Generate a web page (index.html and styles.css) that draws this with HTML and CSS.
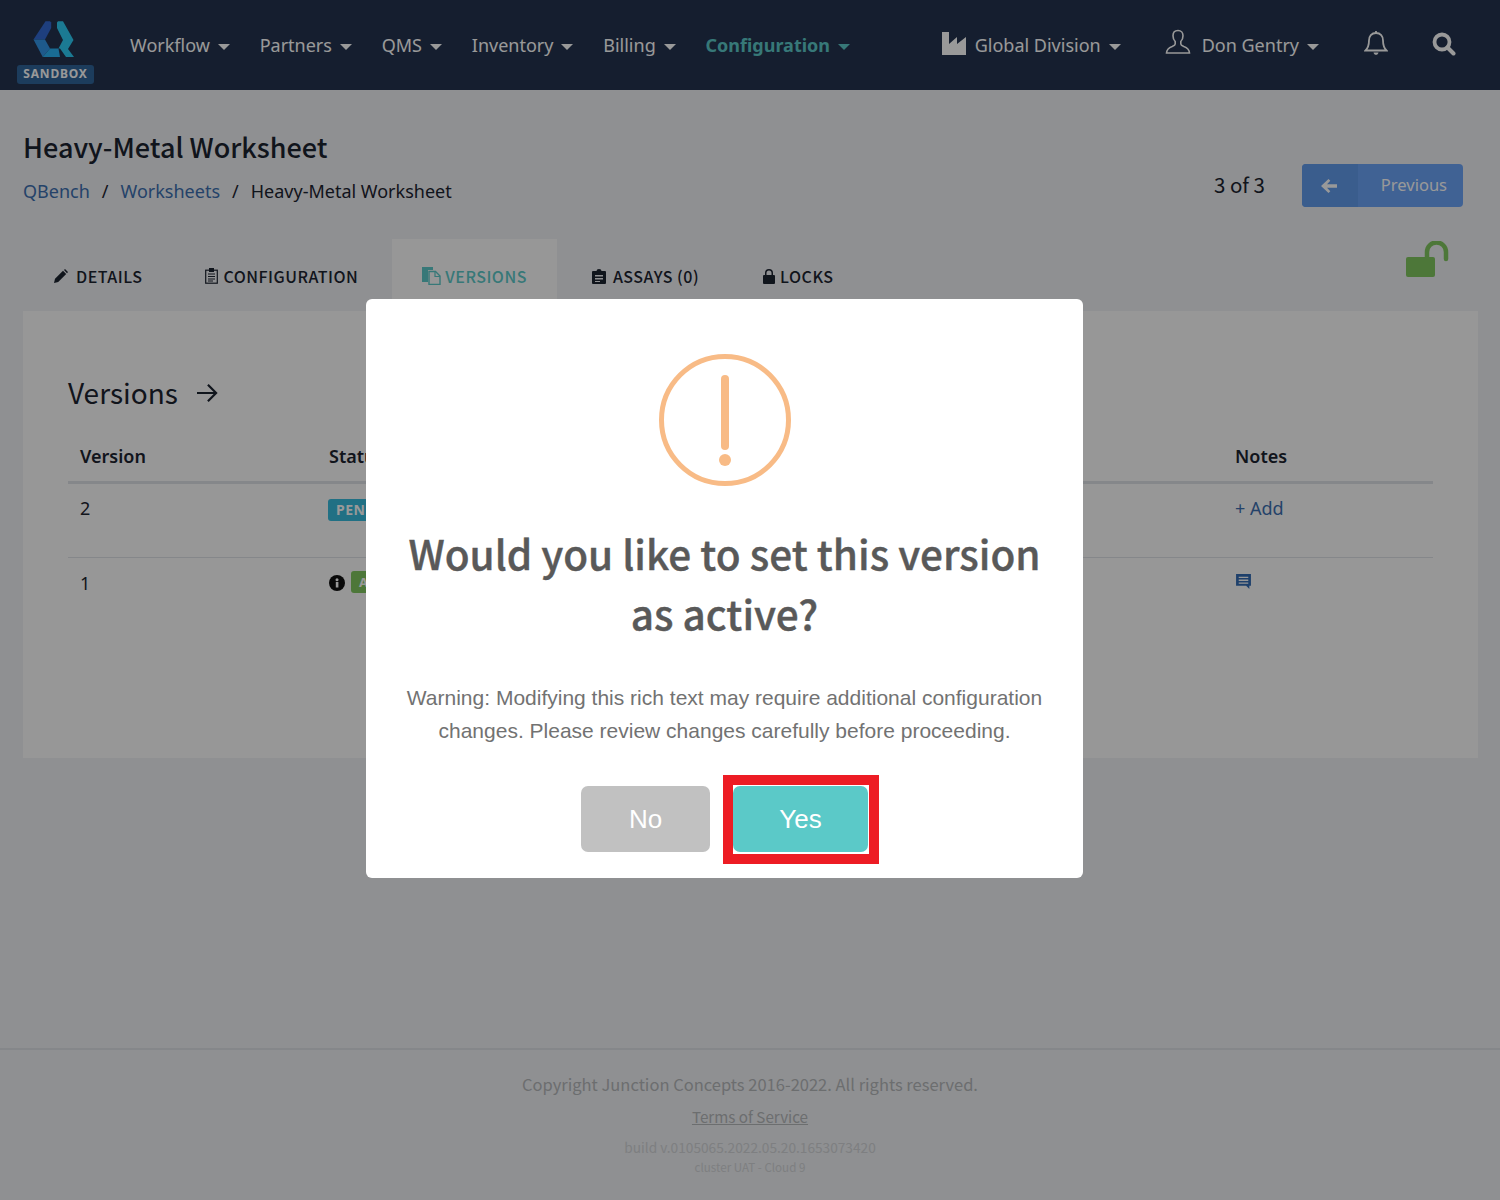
FILE: index.html
```html
<!DOCTYPE html>
<html lang="en">
<head>
<meta charset="utf-8">
<title>Heavy-Metal Worksheet</title>
<link rel="stylesheet" href="styles.css">
</head>
<body>
<header class="topbar">
  <a class="brand">
    <svg class="brand-logo" viewBox="7 8 44 39" width="44" height="39">
      <path d="M19.500 9.300H24l1.200 1.200V16L19 27.500H7.500z" fill="#3269d3"/>
      <path d="M7.500 27.500H19l5 9-7.300 8.500z" fill="#3396e8"/>
      <path d="M24 36.500h8.500l1.500 8.500H16.700z" fill="#2bb2f5"/>
      <path d="M31 10.500l1-1.200h5L47.500 28 42 37l6 8h-8l-6-8.500h-1.500L37 28 31 16z" fill="#2dccf5"/>
    </svg>
    <span class="brand-badge">SANDBOX</span>
  </a>
  <nav class="nav-main">
    <a class="nav-link">Workflow<i class="caret"></i></a>
    <a class="nav-link">Partners<i class="caret"></i></a>
    <a class="nav-link">QMS<i class="caret"></i></a>
    <a class="nav-link">Inventory<i class="caret"></i></a>
    <a class="nav-link">Billing<i class="caret"></i></a>
    <a class="nav-link nav-active">Configuration<i class="caret"></i></a>
  </nav>
  <div class="nav-right">
    <a class="nav-link nav-division">
      <svg viewBox="0 0 26 25" width="26" height="25"><path d="M1 1h7v12l8-7v7l9-7v18H1z" fill="#fff"/></svg>
      Global Division<i class="caret"></i>
    </a>
    <a class="nav-link nav-user">
      <svg viewBox="0 0 26 26" width="26" height="26" fill="none" stroke="#fff" stroke-width="1.600"><path d="M13 1.500c-3.200 0-5 2.200-5 5.200 0 2.600 1 4.600 2.200 5.800v2.500c0 1-1 1.700-3 2.500-3 1.100-5.500 2.500-5.700 6.500h23c-.2-4-2.700-5.400-5.700-6.500-2-.8-3-1.500-3-2.500v-2.500c1.200-1.200 2.200-3.200 2.200-5.800 0-3-1.800-5.200-5-5.200z"/></svg>
      Don Gentry<i class="caret"></i>
    </a>
    <a class="nav-icon">
      <svg viewBox="0 0 24 28" width="24" height="28" fill="none" stroke="#fff" stroke-width="1.800"><path d="M12 4c-4.500 0-7 3.300-7 7.500 0 5-1 7.500-3.500 10h21c-2.500-2.500-3.500-5-3.500-10C19 7.300 16.500 4 12 4z"/><path d="M12 4V2"/><path d="M9.500 23.500c.4 1.600 1.300 2.300 2.500 2.300s2.100-.7 2.500-2.300z" fill="#fff" stroke="none"/></svg>
    </a>
    <a class="nav-icon">
      <svg viewBox="0 0 24 24" width="24" height="24" fill="none" stroke="#fff"><circle cx="10" cy="10" r="7.500" stroke-width="3.800"/><path d="M15.500 15.500l6 6" stroke-width="4" stroke-linecap="round"/></svg>
    </a>
  </div>
</header>

<main class="page">
  <div class="page-head">
    <div class="page-titles">
      <h1 class="page-title">Heavy-Metal Worksheet</h1>
      <ol class="crumbs">
        <li><a class="link">QBench</a></li>
        <li class="crumb-sep">/</li>
        <li><a class="link">Worksheets</a></li>
        <li class="crumb-sep">/</li>
        <li>Heavy-Metal Worksheet</li>
      </ol>
    </div>
    <div class="pager">
      <span class="pager-count">3 of 3</span>
      <a class="pager-btn">
        <span class="pager-btn-icon">
          <svg viewBox="0 0 16 14" width="16" height="14"><path d="M7.500 0L9.300 1.800 6 5.300h10v3.400H6l3.300 3.500L7.500 14 0 7z" fill="#fff"/></svg>
        </span>
        <span class="pager-btn-label">Previous</span>
      </a>
    </div>
  </div>

  <div class="tabs-row">
    <ul class="tabs">
      <li class="tab tab-first">
        <svg viewBox="0 0 14 14" width="14" height="14"><path d="M0 14l1-4.200 8-8 3.200 3.200-8 8zM10 1l1-1 3 3-1 1.200z" fill="currentColor"/></svg>
        <span class="tab-gap-s">Details</span>
      </li>
      <li class="tab">
        <svg viewBox="0 0 13 16" width="13" height="16" fill="none" stroke="currentColor"><rect x=".7" y="2.200" width="11.600" height="13" stroke-width="1.200"/><path d="M3 6h7M3 8.500h7M3 11h7M3 13h5" stroke-width="1.200"/><rect x="4.500" y=".5" width="4" height="3" fill="currentColor"/></svg>
        <span>Configuration</span>
      </li>
      <li class="tab tab-active">
        <svg viewBox="0 0 19 18" width="19" height="18"><path d="M0 0h11v3H6v12H0z" fill="currentColor"/><path d="M7 4.500h6.500l4.500 4.500v8.500H7z" fill="none" stroke="currentColor" stroke-width="1.400"/><path d="M13 5v4.500h5" fill="none" stroke="currentColor" stroke-width="1.200"/></svg>
        <span>Versions</span>
      </li>
      <li class="tab tab-assays">
        <svg viewBox="0 0 14 15" width="14" height="15"><path fill-rule="evenodd" d="M1 2h3.500a2.500 2 0 0 1 5 0H13a1 1 0 0 1 1 1v11a1 1 0 0 1-1 1H1a1 1 0 0 1-1-1V3a1 1 0 0 1 1-1zM3 6v1.500h8V6zm0 3v1.500h8V9zm0 3v1h5v-1z" fill="currentColor"/></svg>
        <span>Assays (0)</span>
      </li>
      <li class="tab">
        <svg viewBox="0 0 12 15" width="12" height="15"><path d="M1 6h1V4a4 4 0 0 1 8 0v2h1a1 1 0 0 1 1 1v7a1 1 0 0 1-1 1H1a1 1 0 0 1-1-1V7a1 1 0 0 1 1-1zm2.500 0h5V4a2.500 2.500 0 0 0-5 0z" fill="currentColor"/></svg>
        <span>Locks</span>
      </li>
    </ul>
    <svg class="lock-open" viewBox="0 0 43 36" width="43" height="36"><rect x="0" y="16" width="29" height="20" rx="2" fill="#80c75f"/><path d="M21 16V11a9.500 9.500 0 0 1 19 0v7" fill="none" stroke="#80c75f" stroke-width="4.500" stroke-linecap="round"/></svg>
  </div>

  <section class="card">
    <h2 class="card-title">Versions
      <svg viewBox="0 0 24 22" width="22" height="20" fill="none" stroke="currentColor" stroke-width="2.400"><path d="M1 11h21M13 2l9 9-9 9"/></svg>
    </h2>
    <table class="versions">
      <colgroup><col class="col-version"><col class="col-status"><col class="col-mid"><col></colgroup>
      <thead>
        <tr><th>Version</th><th>Status</th><th>Created</th><th>Notes</th></tr>
      </thead>
      <tbody>
        <tr>
          <td>2</td>
          <td><span class="tag tag-pending">PENDING</span></td>
          <td></td>
          <td><a class="link">+ Add</a></td>
        </tr>
        <tr>
          <td>1</td>
          <td class="status-cell">
            <svg viewBox="0 0 16 16" width="16" height="16"><circle cx="8" cy="8" r="8" fill="#111"/><rect x="6.800" y="7" width="2.600" height="5.500" fill="#fff"/><circle cx="8" cy="4.700" r="1.500" fill="#fff"/></svg>
            <span class="tag tag-active">ACTIVE</span>
          </td>
          <td></td>
          <td>
            <svg class="note-icon" viewBox="0 0 16 16" width="17" height="17"><path fill-rule="evenodd" d="M1 1h14v11h-1.500v3L10.500 12H1zM3.500 3.500v1.300h9V3.500zm0 2.700v1.300h9V6.200zm0 2.700v1.300h9V8.900z" fill="#336bb3"/></svg>
          </td>
        </tr>
      </tbody>
    </table>
  </section>
</main>

<footer class="footer">
  <p class="footer-copy">Copyright Junction Concepts 2016-2022. All rights reserved.</p>
  <p class="footer-terms"><a>Terms of Service</a></p>
  <p class="footer-build">build v.0105065.2022.05.20.1653073420</p>
  <p class="footer-cluster">cluster UAT - Cloud 9</p>
</footer>

<div class="overlay"></div>
<div class="modal">
  <div class="modal-icon"><span class="modal-icon-bar"></span><span class="modal-icon-dot"></span></div>
  <h2 class="modal-title">Would you like to set this version as active?</h2>
  <p class="modal-text">Warning: Modifying this rich text may require additional configuration changes. Please review changes carefully before proceeding.</p>
  <div class="modal-actions">
    <button class="btn btn-no">No</button>
    <span class="highlight"><button class="btn btn-yes">Yes</button></span>
  </div>
</div>
</body>
</html>
```
FILE: styles.css
```css
* { box-sizing: border-box; }
html, body { margin: 0; padding: 0; }
body {
  min-height: 1200px;
  display: flex;
  flex-direction: column;
  background: #eef0f3;
  font-family: "Noto Sans", sans-serif;
  font-size: 18px;
  color: #1c2330;
}
a { color: inherit; text-decoration: none; }
p, h1, h2, ul, ol { margin: 0; padding: 0; list-style: none; }

/* top bar */
.topbar {
  height: 90px;
  flex: none;
  display: flex;
  align-items: center;
  background: #23334f;
  color: #fff;
  padding-left: 17px;
}
.brand {
  width: 77px;
  display: flex;
  flex-direction: column;
  align-items: center;
  gap: 6px;
  margin-top: 13px;
}
.brand-logo { display: block; margin-left: -2px; }
.brand-badge {
  width: 77px;
  height: 19px;
  background: #2f6499;
  border-radius: 3px;
  font-size: 12px;
  font-weight: 700;
  letter-spacing: .8px;
  line-height: 18px;
  text-align: center;
}
.nav-main { display: flex; margin-left: 36px; gap: 29.800px; }
.nav-link {
  display: flex;
  align-items: center;
  white-space: nowrap;
  font-size: 18px;
  line-height: 24px;
}
.nav-active { color: #5cc9c8; font-weight: 700; }
.caret {
  width: 0;
  height: 0;
  margin-left: 8px;
  margin-top: 3px;
  border-left: 6px solid transparent;
  border-right: 6px solid transparent;
  border-top: 6px solid currentColor;
}
.nav-right { display: flex; align-items: center; margin-left: auto; padding-right: 44px; }
.nav-division svg { margin-right: 8px; margin-top: -4px; }
.nav-user { margin-left: 44px; }
.nav-user svg { margin-right: 11px; margin-top: -6px; }
.nav-icon { display: block; line-height: 0; }
.nav-icon:nth-child(3) { margin-left: 45px; margin-top: -4px; }
.nav-icon:nth-child(4) { margin-left: 44px; margin-top: -2px; }

/* page */
.page { flex: 1; padding: 0 22px 0 23px; }
.page-head {
  display: flex;
  justify-content: space-between;
  align-items: flex-start;
  height: 149px;
  padding-top: 39px;
}
.page-title {
  font-family: "Noto Sans CJK JP", "Noto Sans", sans-serif;
  font-size: 27px;
  font-weight: 500;
  line-height: 36px;
  color: #1c2330;
}
.crumbs { display: flex; gap: 12px; margin-top: 14px; line-height: 24px; }
.link { color: #3c6fb0; }
.pager { display: flex; align-items: center; gap: 37px; margin-right: 15px; margin-top: 35px; }
.pager-count { font-family: "Noto Sans CJK JP", "Noto Sans", sans-serif; font-size: 20.500px; margin-bottom: 4px; }
.pager-btn {
  width: 161px;
  height: 43px;
  display: flex;
  border-radius: 4px;
  overflow: hidden;
  background: #6ba3f7;
  color: #fff;
}
.pager-btn-icon {
  width: 56px;
  display: flex;
  align-items: center;
  justify-content: center;
  padding-right: 2px;
  background: #629beb;
}
.pager-btn-label { flex: 1; text-align: right; padding-right: 16px; line-height: 42px; font-size: 16.500px; }

/* tabs */
.tabs-row { display: flex; justify-content: space-between; height: 72px; }
.tabs { display: flex; gap: 4px; padding-left: 1px; }
.tab {
  display: flex;
  align-items: center;
  gap: 5px;
  height: 72px;
  padding: 0 30px;
  text-transform: uppercase;
  font-family: "Noto Sans CJK JP", "Noto Sans", sans-serif;
  font-size: 16px;
  font-weight: 500;
  letter-spacing: .5px;
  color: #1c2330;
  line-height: 1;
}
.tab svg, .tab span { margin-top: 2px; }
.tab-first { padding-right: 29px; }
.tab-gap-s { margin-left: 3px; }
.tab-assays { gap: 7px; margin-left: 1px; }
.tab-active { gap: 4px; background: #fcfcfc; color: #5cc9c8; }
.lock-open { margin: 2px 29px 0 0; }

/* card */
.card {
  height: 447px;
  background: #fcfcfc;
  padding: 0 45px;
}
.card-title {
  display: flex;
  align-items: center;
  gap: 18px;
  padding-top: 60px;
  font-family: "Noto Sans CJK JP", "Noto Sans", sans-serif;
  font-size: 28px;
  font-weight: 400;
  line-height: 42px;
}
.card-title svg { margin-top: 2px; }
.versions {
  width: 1365px;
  table-layout: fixed;
  border-collapse: collapse;
  margin-top: 21px;
}
.col-version { width: 249px; }
.col-status { width: 300px; }
.col-mid { width: 606px; }
.versions th {
  padding: 0 12px 13px;
  height: 48px;
  vertical-align: bottom;
  text-align: left;
  font-size: 18px;
  font-weight: 600;
  border-bottom: 3px solid #dee2e6;
}
.versions td {
  padding: 12px 12px 0;
  height: 75px;
  vertical-align: top;
  line-height: 24px;
  border-bottom: 1px solid #dee2e6;
}
.versions tr:last-child td { border-bottom: 0; padding-top: 13px; }
.status-cell { display: flex; align-items: flex-start; gap: 6px; }
.status-cell svg { margin-top: 4px; }
.note-icon { margin-top: 2px; }
.tag {
  display: inline-block;
  height: 22px;
  padding: 0 8px;
  border-radius: 3px;
  font-size: 14px;
  font-weight: 700;
  line-height: 22px;
  letter-spacing: .5px;
  color: #fff;
}
.tag-pending { background: #37bbdd; margin-top: 2px; margin-left: -1px; }
.tag-active { background: #80c75f; font-size: 13px; letter-spacing: 0; }

/* footer */
.footer {
  flex: none;
  height: 152px;
  border-top: 2px solid #dee2e6;
  text-align: center;
  font-family: "Noto Sans CJK JP", "Noto Sans", sans-serif;
  color: #b5b7ba;
  padding-top: 22px;
}
.footer-copy { font-size: 16.500px; line-height: 24px; }
.footer-terms { font-size: 15.200px; line-height: 24px; margin-top: 8px; text-decoration: underline; }
.footer-build { font-size: 13.700px; line-height: 20px; margin-top: 9px; color: #d2d4d7; }
.footer-cluster { font-size: 11.600px; line-height: 18px; margin-top: 1px; color: #d2d4d7; }

/* dialog */
.overlay { position: fixed; inset: 0; background: rgba(0, 0, 0, .4); }
.modal {
  position: absolute;
  left: 366px;
  top: 299px;
  width: 717px;
  height: 579px;
  background: #fff;
  border-radius: 6px;
  display: flex;
  flex-direction: column;
  align-items: center;
  padding-top: 55px;
}
.modal-icon {
  position: relative;
  width: 132px;
  height: 132px;
  border: 5px solid #f8bb86;
  border-radius: 50%;
}
.modal-icon-bar {
  position: absolute;
  left: 57px;
  top: 16px;
  width: 8px;
  height: 75px;
  border-radius: 4px;
  background: #f8bb86;
}
.modal-icon-dot {
  position: absolute;
  left: 55px;
  top: 95px;
  width: 12px;
  height: 12px;
  border-radius: 50%;
  background: #f8bb86;
}
.modal-title {
  width: 634px;
  margin-top: 37px;
  text-align: center;
  font-family: "Noto Sans CJK JP", "Noto Sans", sans-serif;
  font-size: 40.500px;
  font-weight: 500;
  -webkit-text-stroke: .4px #595959;
  line-height: 60px;
  color: #595959;
}
.modal-text {
  width: 660px;
  margin-top: 38px;
  text-align: center;
  font-family: "Liberation Sans", Arial, sans-serif;
  font-size: 21px;
  line-height: 33px;
  color: #727272;
}
.modal-actions {
  display: flex;
  align-items: flex-start;
  margin-top: 28px;
  margin-left: 11px;
  gap: 13px;
}
.btn {
  display: block;
  height: 66px;
  border: 0;
  border-radius: 7px;
  color: #fff;
  font-family: "Liberation Sans", Arial, sans-serif;
  font-size: 26px;
}
.btn-no { width: 129px; margin-top: 11px; background: #c1c1c1; }
.btn-yes { width: 135px; background: #5bc9c8; }
.highlight { display: block; padding: 1px 1px 2px 0; border: 10px solid #ed1c24; background: #fff; }
```
